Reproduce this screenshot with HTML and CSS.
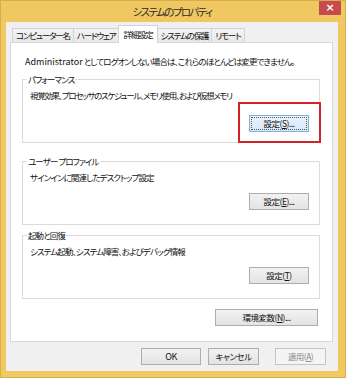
FILE: index.html
```html
<!DOCTYPE html>
<html lang="ja">
<head>
<meta charset="utf-8">
<title>システムのプロパティ</title>
<link rel="stylesheet" href="styles.css">
</head>
<body>
<div class="window">
  <div class="titlebar">
    <span class="spacer"></span>
    <span class="title">システムのプロパティ</span>
    <span class="close-wrap"><span class="close">×</span></span>
  </div>
  <div class="client">
    <div class="tabs">
      <span class="tab">コンピューター名</span>
      <span class="tab">ハードウェア</span>
      <span class="tab active">詳細設定</span>
      <span class="tab">システムの保護</span>
      <span class="tab">リモート</span>
    </div>
    <div class="panel">
      <p class="note"><span class="latin">Administrator</span> としてログオンしない場合は、これらのほとんどは変更できません。</p>
      <fieldset class="group g1">
        <legend>パフォーマンス</legend>
        <p class="desc tight">視覚効果、プロセッサのスケジュール、メモリ使用、および仮想メモリ</p>
        <div class="btn-row">
          <span class="highlight-anchor">
            <span class="btn focused"><span class="focus-ring">設定(<u>S</u>)...</span></span>
            <span class="redbox"></span>
          </span>
        </div>
      </fieldset>
      <fieldset class="group g2">
        <legend>ユーザー プロファイル</legend>
        <p class="desc">サインインに関連したデスクトップ設定</p>
        <div class="btn-row"><span class="btn">設定(<u>E</u>)...</span></div>
      </fieldset>
      <fieldset class="group g3">
        <legend>起動と回復</legend>
        <p class="desc">システム起動、システム障害、およびデバッグ情報</p>
        <div class="btn-row"><span class="btn">設定(<u>T</u>)</span></div>
      </fieldset>
      <div class="env-row"><span class="btn env">環境変数(<u>N</u>)...</span></div>
    </div>
    <div class="footer">
      <span class="btn ok latin">OK</span>
      <span class="btn cancel">キャンセル</span>
      <span class="btn apply disabled">適用(<u>A</u>)</span>
    </div>
  </div>
</div>
</body>
</html>
```
FILE: styles.css
```css
* { box-sizing: border-box; }
html, body { margin: 0; padding: 0; }
body {
  width: 346px;
  height: 378px;
  overflow: hidden;
  font-family: "Noto Sans CJK JP", "Noto Sans", sans-serif;
  font-feature-settings: "palt";
  color: #111;
  font-size: 8.5px;
  letter-spacing: -0.9px;
}
.latin { letter-spacing: 0; font-size: 9px; }
.window {
  width: 346px;
  height: 378px;
  background: #f0c862;
  border: 1px solid #d8ad4c;
  padding: 0 7px 6px 5px;
  display: flex;
  flex-direction: column;
}
.titlebar {
  height: 21px;
  display: grid;
  grid-template-columns: 1fr auto 1fr;
  align-items: start;
}
.title {
  font-size: 10.5px;
  line-height: 22px;
  color: #2b2b2b;
  letter-spacing: -1.6px;
}
.close-wrap {
  display: flex;
  justify-content: flex-end;
  margin-right: -3px;
}
.close {
  width: 22px;
  height: 14px;
  background: #c74a4e;
  color: #fff;
  font-family: "DejaVu Sans", sans-serif;
  font-size: 11px;
  font-weight: bold;
  letter-spacing: 0;
  line-height: 14px;
  text-align: center;
}
.client {
  flex: 1;
  background: #f0f0f0;
  display: flex;
  flex-direction: column;
  padding: 3px 5px 0 4px;
}
.tabs {
  display: flex;
  align-items: flex-end;
  height: 17px;
  padding-left: 2px;
  position: relative;
  z-index: 1;
}
.tab {
  height: 14px;
  border: 1px solid #d3d3d3;
  border-bottom: none;
  background: linear-gradient(#f3f3f3, #e8e8e8);
  padding: 0 3px;
  line-height: 13px;
  margin-right: -1px;
  white-space: nowrap;
  letter-spacing: -1.2px;
}
.tab.active {
  background: #fff;
  line-height: 16px;
  padding: 0 4px;
  margin-bottom: -1px;
  height: 18px;
}
.panel {
  background: #fff;
  border: 1px solid #d9d9d9;
  height: 300px;
  padding: 0 12px 0 11px;
}
.note {
  margin: 11px 0 0 3px;
  line-height: 14px;
  white-space: nowrap;
}
.group {
  margin: 0;
  border: 1px solid #dcdcdc;
  padding: 0 10px 0 7px;
  height: 70px;
}
.group legend {
  padding: 0 1px;
  margin-left: -3px;
  line-height: 12px;
}
.g1 { margin-top: 4px; }
.g2 { margin-top: 12px; }
.g3 { margin-top: 4px; }
.desc {
  margin: 3px 0 0 0;
  line-height: 14px;
  white-space: nowrap;
}
.desc.tight { letter-spacing: -1.3px; }
.btn-row {
  display: flex;
  justify-content: flex-end;
}
.g1 .btn-row { margin-top: 13px; }
.g2 .btn-row, .g3 .btn-row { margin-top: 9px; }
.btn {
  display: inline-flex;
  align-items: center;
  justify-content: center;
  width: 60px;
  height: 17px;
  border: 1px solid #adadad;
  background: linear-gradient(#f2f2f2, #e3e3e3);
  white-space: nowrap;
  line-height: 15px;
  letter-spacing: -0.5px;
}
.btn u { text-underline-offset: 1px; }
.btn.focused {
  border-color: #7fb1e0;
  background: linear-gradient(#e9f3fb, #d9e9f7);
  padding: 1px;
}
.focus-ring {
  display: flex;
  align-items: center;
  justify-content: center;
  width: 100%;
  height: 100%;
  border: 1px dotted #555;
}
.highlight-anchor {
  position: relative;
  display: inline-flex;
}
.redbox {
  position: absolute;
  left: -11px;
  right: -12px;
  top: -13px;
  bottom: -11px;
  border: 2px solid #d3222a;
}
.env-row {
  display: flex;
  justify-content: flex-end;
  margin-top: 10px;
  padding-right: 2px;
}
.btn.env { width: 103px; }
.footer {
  display: flex;
  justify-content: flex-end;
  padding: 6px 7px 0 0;
  gap: 7px;
}
.btn.ok { width: 60px; }
.btn.cancel { width: 51px; }
.btn.apply { width: 51px; margin-left: 9px; }
.btn.disabled {
  color: #8a8a8a;
  border-color: #c5c5c5;
  background: #f4f4f4;
}
```
